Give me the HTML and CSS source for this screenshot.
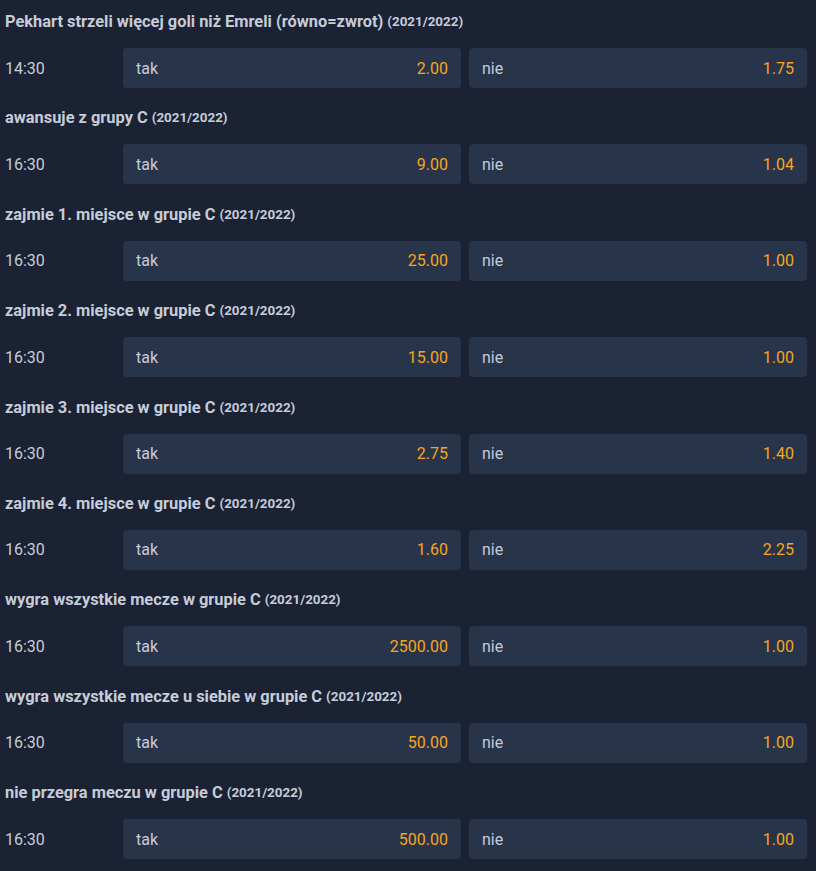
FILE: index.html
```html
<!DOCTYPE html>
<html lang="pl">
<head>
    <meta charset="UTF-8">
    <title>Zakłady specjalne</title>
    <link rel="stylesheet" href="styles.css">
</head>
<body>
    <div class="markets">
        <div class="market">
            <h2 class="market-title">Pekhart strzeli więcej goli niż Emreli (równo=zwrot) <span class="season">(2021/2022)</span></h2>
            <div class="market-row">
                <span class="time">14:30</span>
                <button class="odd"><span class="label">tak</span><span class="value">2.00</span></button>
                <button class="odd"><span class="label">nie</span><span class="value">1.75</span></button>
            </div>
        </div>
        <div class="market">
            <h2 class="market-title">awansuje z grupy C <span class="season">(2021/2022)</span></h2>
            <div class="market-row">
                <span class="time">16:30</span>
                <button class="odd"><span class="label">tak</span><span class="value">9.00</span></button>
                <button class="odd"><span class="label">nie</span><span class="value">1.04</span></button>
            </div>
        </div>
        <div class="market">
            <h2 class="market-title">zajmie 1. miejsce w grupie C <span class="season">(2021/2022)</span></h2>
            <div class="market-row">
                <span class="time">16:30</span>
                <button class="odd"><span class="label">tak</span><span class="value">25.00</span></button>
                <button class="odd"><span class="label">nie</span><span class="value">1.00</span></button>
            </div>
        </div>
        <div class="market">
            <h2 class="market-title">zajmie 2. miejsce w grupie C <span class="season">(2021/2022)</span></h2>
            <div class="market-row">
                <span class="time">16:30</span>
                <button class="odd"><span class="label">tak</span><span class="value">15.00</span></button>
                <button class="odd"><span class="label">nie</span><span class="value">1.00</span></button>
            </div>
        </div>
        <div class="market">
            <h2 class="market-title">zajmie 3. miejsce w grupie C <span class="season">(2021/2022)</span></h2>
            <div class="market-row">
                <span class="time">16:30</span>
                <button class="odd"><span class="label">tak</span><span class="value">2.75</span></button>
                <button class="odd"><span class="label">nie</span><span class="value">1.40</span></button>
            </div>
        </div>
        <div class="market">
            <h2 class="market-title">zajmie 4. miejsce w grupie C <span class="season">(2021/2022)</span></h2>
            <div class="market-row">
                <span class="time">16:30</span>
                <button class="odd"><span class="label">tak</span><span class="value">1.60</span></button>
                <button class="odd"><span class="label">nie</span><span class="value">2.25</span></button>
            </div>
        </div>
        <div class="market">
            <h2 class="market-title">wygra wszystkie mecze w grupie C <span class="season">(2021/2022)</span></h2>
            <div class="market-row">
                <span class="time">16:30</span>
                <button class="odd"><span class="label">tak</span><span class="value">2500.00</span></button>
                <button class="odd"><span class="label">nie</span><span class="value">1.00</span></button>
            </div>
        </div>
        <div class="market">
            <h2 class="market-title">wygra wszystkie mecze u siebie w grupie C <span class="season">(2021/2022)</span></h2>
            <div class="market-row">
                <span class="time">16:30</span>
                <button class="odd"><span class="label">tak</span><span class="value">50.00</span></button>
                <button class="odd"><span class="label">nie</span><span class="value">1.00</span></button>
            </div>
        </div>
        <div class="market">
            <h2 class="market-title">nie przegra meczu w grupie C <span class="season">(2021/2022)</span></h2>
            <div class="market-row">
                <span class="time">16:30</span>
                <button class="odd"><span class="label">tak</span><span class="value">500.00</span></button>
                <button class="odd"><span class="label">nie</span><span class="value">1.00</span></button>
            </div>
        </div>
    </div>
</body>
</html>
```

FILE: styles.css
```css
* {
    margin: 0;
    padding: 0;
    box-sizing: border-box;
}

body {
    font-family: Roboto, 'Liberation Sans', sans-serif;
    background: #1a2233;
    color: #c6ccd8;
    min-height: 100vh;
}

.markets {
    padding: 0 9px 0 5px;
}

.market-title {
    height: 48px;
    display: flex;
    align-items: center;
    gap: 4px;
    padding-bottom: 5px;
    font-size: 16.4px;
    font-weight: 700;
    color: #c6ccd8;
}

.season {
    font-size: 13.4px;
    font-weight: 700;
}

.market-row {
    display: flex;
    align-items: center;
    gap: 8px;
    height: 40px;
    margin-bottom: 8.4px;
}

.time {
    width: 110px;
    font-size: 16px;
    color: #c6ccd8;
}

.odd {
    flex: 1;
    height: 40px;
    display: flex;
    align-items: center;
    justify-content: space-between;
    padding: 0 13px;
    background: #28344a;
    border: none;
    border-radius: 4px;
    font-family: Roboto, 'Liberation Sans', sans-serif;
    font-size: 16px;
    cursor: pointer;
}

.label {
    color: #c6ccd8;
}

.value {
    color: #f6a61d;
}
```
